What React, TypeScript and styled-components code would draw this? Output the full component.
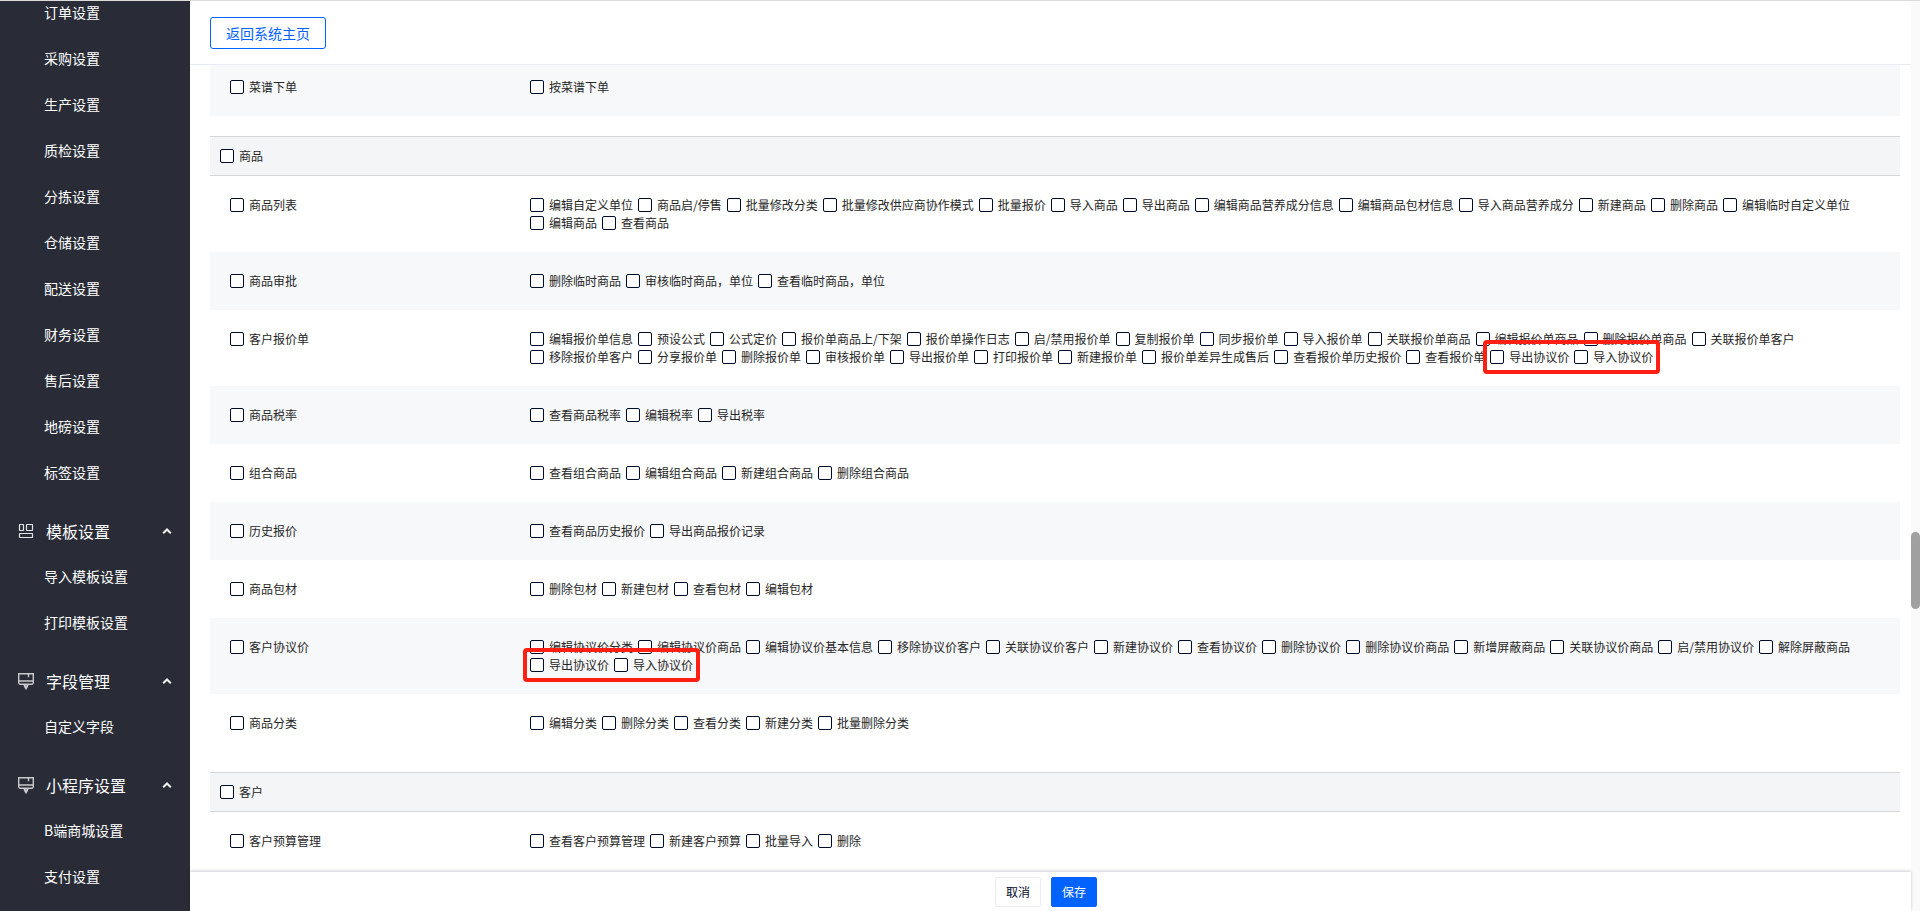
import React from "react";
import styled, { createGlobalStyle, css } from "styled-components";

const Global = createGlobalStyle`
  *, *::before, *::after { box-sizing: border-box; }
  html, body { margin: 0; height: 100%; overflow: hidden; }
  body {
    background: #fff;
    color: #262626;
    font-family: "Noto Sans CJK SC", sans-serif;
    font-size: 12px;
    line-height: 18px;
  }
`;

const Page = styled.div`
  display: flex;
  height: 100vh;
  border-top: 1px solid #dcdcdc;
  overflow: hidden;
`;

const Sidebar = styled.nav`
  flex: 0 0 190px;
  background: #292c36;
  color: #fff;
  overflow: hidden;
`;

const Menu = styled.div`
  margin-top: -11px;
`;

const Group = styled.section`
  padding-bottom: 12px;
`;

const GroupTitle = styled.button`
  display: flex;
  align-items: center;
  width: 100%;
  height: 46px;
  padding: 0 18px 0 17px;
  border: 0;
  background: none;
  color: #fff;
  font: inherit;
  font-size: 16px;
  text-align: left;
`;

const GroupName = styled.span`
  flex: 1;
  margin-left: 11px;
`;

const MenuLink = styled.a`
  display: flex;
  align-items: center;
  height: 46px;
  padding: 0 0 2px 44px;
  color: #fff;
  font-size: 14px;
  text-decoration: none;
`;

const Main = styled.main`
  flex: 1;
  min-width: 0;
  display: flex;
  flex-direction: column;
`;

const Header = styled.header`
  position: relative;
  z-index: 1;
  flex: 0 0 64px;
  display: flex;
  align-items: center;
  padding: 0 20px;
  background: #fff;
  border-bottom: 1px solid #e8ebf2;
`;

const BackButton = styled.button`
  height: 32px;
  padding: 0 15px;
  border: 1px solid #0062ff;
  border-radius: 3px;
  background: #fff;
  color: #0062ff;
  font: inherit;
  font-size: 14px;
`;

const Content = styled.div`
  flex: 1;
  min-height: 0;
  margin-top: -7px;
  padding: 0 11px 0 20px;
`;

const Section = styled.section`
  margin-bottom: 20px;
`;

const SectionHead = styled.div`
  display: flex;
  align-items: center;
  height: 40px;
  padding: 0 10px;
  background: #f4f5f7;
  border: solid #d4d6d9;
  border-width: 1px 0;
`;

const Row = styled.div<{ $shaded: boolean }>`
  display: grid;
  grid-template-columns: 300px 1fr;
  align-items: start;
  padding: 20px;
  background: ${(p) => (p.$shaded ? "#f7f8fa" : "#fff")};
`;

const Options = styled.div`
  display: flex;
  flex-wrap: wrap;
  column-gap: 5px;
  padding-right: 20px;
`;

const CheckLabel = styled.label`
  display: flex;
  align-items: center;
  gap: 5px;
  white-space: nowrap;
`;

const Box = styled.input`
  appearance: none;
  flex: none;
  width: 14px;
  height: 14px;
  margin: 0;
  border: 1px solid #000a29;
  border-radius: 2px;
  background: #fff;
  &:checked { background: #0062ff; }
`;

const Marked = styled.span`
  position: relative;
  display: flex;
  column-gap: 5px;
  &::after {
    content: "";
    position: absolute;
    inset: -8px -7px;
    border: 4px solid #ff1f13;
    border-radius: 4px;
    pointer-events: none;
  }
`;

const Track = styled.div`
  flex: 0 0 9px;
  padding-top: 531px;
  background: #fafafa;
`;

const Thumb = styled.div`
  height: 77px;
  border-radius: 5px;
  background: #a0a0a0;
`;

const Footer = styled.footer`
  position: relative;
  z-index: 1;
  flex: 0 0 39px;
  display: flex;
  align-items: center;
  justify-content: center;
  gap: 10px;
  padding-right: 9px;
  background: #fff;
  box-shadow: 0 -1px 3px rgba(0, 10, 41, 0.2);
`;

const FootButton = styled.button<{ $primary?: boolean }>`
  height: 30px;
  padding: 0 10px;
  border: 1px solid #ebecf0;
  border-radius: 2px;
  background: #fff;
  color: #000a29;
  font: inherit;
  ${(p) =>
    p.$primary &&
    css`
      border-color: #0062ff;
      background: #0062ff;
      color: #fff;
    `}
`;

const GridIcon = () => (
  <svg width="18" height="18" viewBox="0 0 18 18" fill="none" stroke="#e4e5e7" strokeWidth="1.2" aria-hidden="true">
    <rect x="2.5" y="2.5" width="4" height="6" rx="0.5" />
    <rect x="9.5" y="2.5" width="6" height="6" rx="0.5" />
    <rect x="2.5" y="11.5" width="13" height="4" rx="0.5" />
  </svg>
);

const BrushIcon = () => (
  <svg width="18" height="18" viewBox="0 0 18 18" fill="none" stroke="#c9cacd" strokeWidth="1.4" aria-hidden="true">
    <path d="M1.7 1.7h14.6v9.1q0 1.4-1.4 1.4H3.1q-1.4 0-1.4-1.4zM2 9h14M11.5 2v3.2" />
    <path d="M7.3 12.2v1.6l1.7 3 1.7-3v-1.6M9 13v3" />
  </svg>
);

const Caret = () => (
  <svg width="10" height="10" viewBox="0 0 10 10" fill="none" stroke="#f0f0f1" strokeWidth="2" aria-hidden="true">
    <path d="M1.2 7.3L5 3.5l3.8 3.8" />
  </svg>
);

const Check = ({ text }: { text: string }) => (
  <CheckLabel>
    <Box type="checkbox" />
    {text}
  </CheckLabel>
);

type RowData = { name: string; items: string[]; marked?: string[] };

const menu = [
  {
    items: ["订单设置", "采购设置", "生产设置", "质检设置", "分拣设置", "仓储设置", "配送设置", "财务设置", "售后设置", "地磅设置", "标签设置"],
  },
  { title: "模板设置", icon: <GridIcon />, items: ["导入模板设置", "打印模板设置"] },
  { title: "字段管理", icon: <BrushIcon />, items: ["自定义字段"] },
  { title: "小程序设置", icon: <BrushIcon />, items: ["B端商城设置", "支付设置"] },
];

const sections: { title?: string; shadeFrom: number; rows: RowData[] }[] = [
  { shadeFrom: 0, rows: [{ name: "菜谱下单", items: ["按菜谱下单"] }] },
  {
    title: "商品",
    shadeFrom: 1,
    rows: [
      {
        name: "商品列表",
        items: ["编辑自定义单位", "商品启/停售", "批量修改分类", "批量修改供应商协作模式", "批量报价", "导入商品", "导出商品", "编辑商品营养成分信息", "编辑商品包材信息", "导入商品营养成分", "新建商品", "删除商品", "编辑临时自定义单位", "编辑商品", "查看商品"],
      },
      { name: "商品审批", items: ["删除临时商品", "审核临时商品，单位", "查看临时商品，单位"] },
      {
        name: "客户报价单",
        items: ["编辑报价单信息", "预设公式", "公式定价", "报价单商品上/下架", "报价单操作日志", "启/禁用报价单", "复制报价单", "同步报价单", "导入报价单", "关联报价单商品", "编辑报价单商品", "删除报价单商品", "关联报价单客户", "移除报价单客户", "分享报价单", "删除报价单", "审核报价单", "导出报价单", "打印报价单", "新建报价单", "报价单差异生成售后", "查看报价单历史报价", "查看报价单"],
        marked: ["导出协议价", "导入协议价"],
      },
      { name: "商品税率", items: ["查看商品税率", "编辑税率", "导出税率"] },
      { name: "组合商品", items: ["查看组合商品", "编辑组合商品", "新建组合商品", "删除组合商品"] },
      { name: "历史报价", items: ["查看商品历史报价", "导出商品报价记录"] },
      { name: "商品包材", items: ["删除包材", "新建包材", "查看包材", "编辑包材"] },
      {
        name: "客户协议价",
        items: ["编辑协议价分类", "编辑协议价商品", "编辑协议价基本信息", "移除协议价客户", "关联协议价客户", "新建协议价", "查看协议价", "删除协议价", "删除协议价商品", "新增屏蔽商品", "关联协议价商品", "启/禁用协议价", "解除屏蔽商品"],
        marked: ["导出协议价", "导入协议价"],
      },
      { name: "商品分类", items: ["编辑分类", "删除分类", "查看分类", "新建分类", "批量删除分类"] },
    ],
  },
  {
    title: "客户",
    shadeFrom: 1,
    rows: [{ name: "客户预算管理", items: ["查看客户预算管理", "新建客户预算", "批量导入", "删除"] }],
  },
];

export default function App() {
  return (
    <>
      <Global />
      <Page>
        <Sidebar>
          <Menu>
            {menu.map((group, i) => (
              <Group key={i}>
                {group.title && (
                  <GroupTitle type="button">
                    {group.icon}
                    <GroupName>{group.title}</GroupName>
                    <Caret />
                  </GroupTitle>
                )}
                {group.items.map((item) => (
                  <MenuLink href="#" key={item}>{item}</MenuLink>
                ))}
              </Group>
            ))}
          </Menu>
        </Sidebar>
        <Main>
          <Header>
            <BackButton type="button">返回系统主页</BackButton>
          </Header>
          <Content>
            {sections.map((section, i) => (
              <Section key={i}>
                {section.title && (
                  <SectionHead>
                    <Check text={section.title} />
                  </SectionHead>
                )}
                {section.rows.map((row, r) => (
                  <Row key={row.name} $shaded={(r + section.shadeFrom) % 2 === 0}>
                    <Check text={row.name} />
                    <Options>
                      {row.items.map((item) => (
                        <Check key={item} text={item} />
                      ))}
                      {row.marked && (
                        <Marked>
                          {row.marked.map((item) => (
                            <Check key={item} text={item} />
                          ))}
                        </Marked>
                      )}
                    </Options>
                  </Row>
                ))}
              </Section>
            ))}
          </Content>
          <Footer>
            <FootButton type="button">取消</FootButton>
            <FootButton type="button" $primary>保存</FootButton>
          </Footer>
        </Main>
        <Track>
          <Thumb />
        </Track>
      </Page>
    </>
  );
}
